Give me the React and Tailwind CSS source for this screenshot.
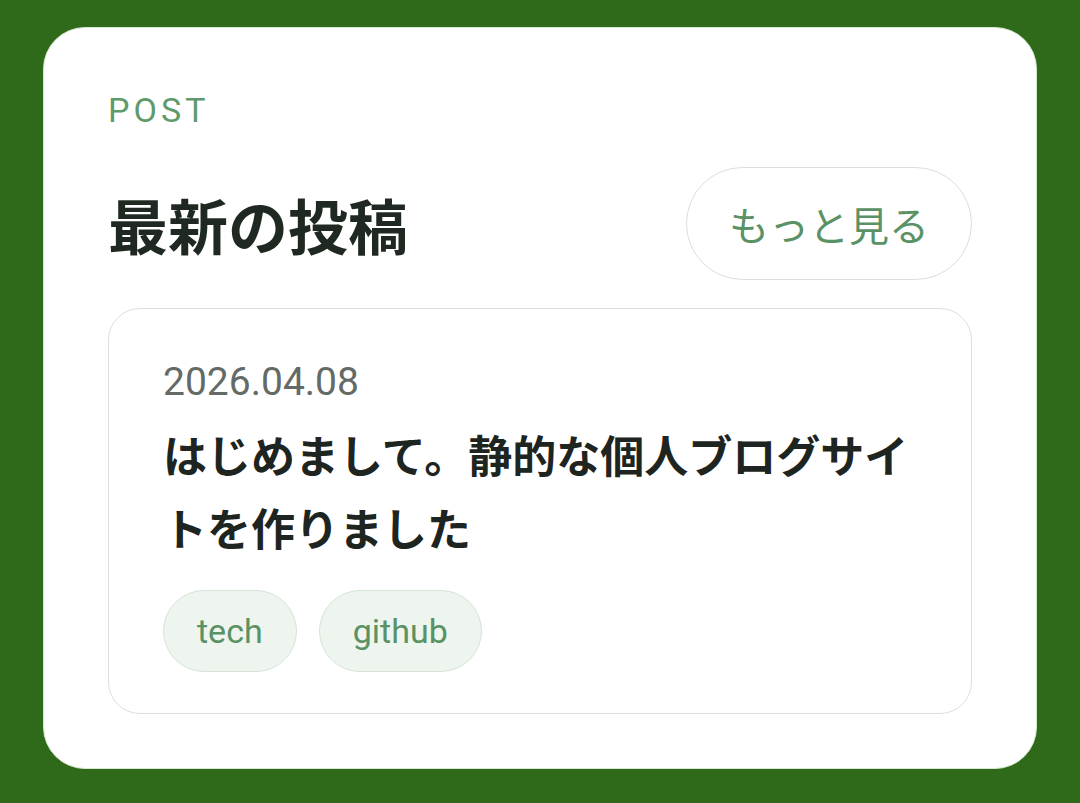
import React from 'react';

const tags = ['tech', 'github'];

function PostCard() {
  return (
    <article className="rounded-[32px] border border-[#dedfdd] bg-white pl-[54px] pr-[40px] pt-[54px] pb-[41px]">
      <p className="text-[39px] leading-none text-[#646a66] font-['Roboto',sans-serif]">2026.04.08</p>
      <h3 className="mt-[16px] text-[44px] font-bold leading-[73px] text-[#1e2520] font-['Noto_Sans_CJK_JP',sans-serif]">
        はじめまして。静的な個人ブログサイトを作りました
      </h3>
      <div className="mt-[26px] flex gap-[22px]">
        {tags.map((tag) => (
          <span
            key={tag}
            className="flex h-[82px] items-center rounded-full border border-[#d6e3d8] bg-[#edf5ee] px-[33px] text-[34px] text-[#5a9165] font-['Roboto',sans-serif]"
          >
            {tag}
          </span>
        ))}
      </div>
    </article>
  );
}

export default function App() {
  return (
    <div className="min-h-screen bg-[#2f6a1b] pl-[43px] pr-[43px] pt-[27px] pb-[34px]">
      <section className="h-[742px] rounded-[42px] border border-[#d3e8cc] bg-white px-[64px] pt-[65px]">
        <p className="text-[34px] leading-none tracking-[0.12em] text-[#5f9a6b] font-['Roboto',sans-serif]">POST</p>
        <div className="mt-[40px] flex items-center justify-between">
          <h2 className="text-[60px] font-bold leading-none text-[#1f2922] font-['Noto_Sans_CJK_JP',sans-serif]">
            最新の投稿
          </h2>
          <button className="flex h-[113px] w-[286px] items-center justify-center rounded-full border border-[#dcdedc] bg-white text-[40px] text-[#5a9165] font-['Noto_Sans_CJK_JP',sans-serif]">
            もっと見る
          </button>
        </div>
        <div className="mt-[28px]">
          <PostCard />
        </div>
      </section>
    </div>
  );
}
